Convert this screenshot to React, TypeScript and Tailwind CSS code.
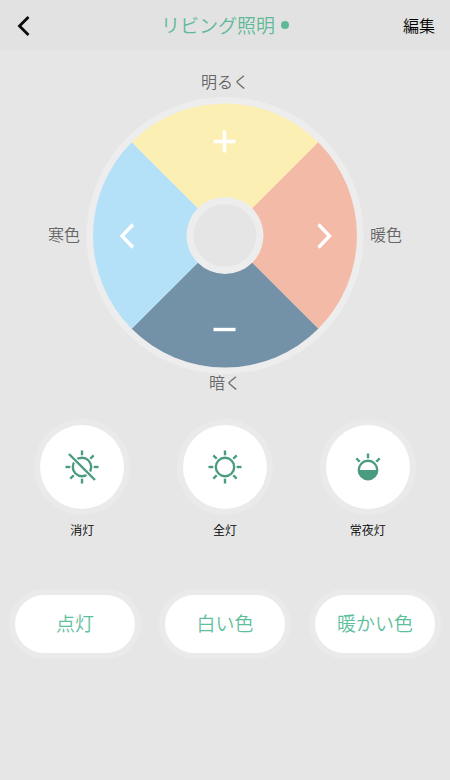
import { useState } from 'react';
import type { ReactNode } from 'react';

type LampMode = 'off' | 'full' | 'night';

const RAY_ANGLES = [0, 45, 90, 135, 180, 225, 270, 315];

const Rays = ({ angles, cy = 18 }: { angles: number[]; cy?: number }) => (
    <>
        {angles.map((angle) => (
            <path key={angle} d={`M18 ${cy - 16.5}v4.8`} transform={`rotate(${angle} 18 ${cy})`} />
        ))}
    </>
);

const OffIcon = () => (
    <svg viewBox="0 0 36 36" className="size-9" fill="none" stroke="#4b9b7f" strokeWidth="2.4" aria-hidden="true">
        <circle cx="18" cy="18" r="9.2" />
        <Rays angles={RAY_ANGLES.filter((angle) => angle !== 135 && angle !== 315)} />
        <path d="M8 8l20 20" stroke="#fff" strokeWidth="5" />
        <path d="M5 5l26 26" />
    </svg>
);

const FullIcon = () => (
    <svg viewBox="0 0 36 36" className="size-9" fill="none" stroke="#4b9b7f" strokeWidth="2.4" aria-hidden="true">
        <circle cx="18" cy="18" r="9.2" />
        <Rays angles={RAY_ANGLES} />
    </svg>
);

const NightIcon = () => (
    <svg viewBox="0 0 36 36" className="size-9" fill="none" stroke="#4b9b7f" strokeWidth="2.4" aria-hidden="true">
        <circle cx="18" cy="21" r="9.2" />
        <path d="M8.8 21h18.4a9.2 9.2 0 0 1-18.4 0z" fill="#4b9b7f" stroke="none" />
        <Rays angles={[0, 45, 315]} cy={21} />
    </svg>
);

const modes: { id: LampMode; label: string; icon: ReactNode }[] = [
    { id: 'off', label: '消灯', icon: <OffIcon /> },
    { id: 'full', label: '全灯', icon: <FullIcon /> },
    { id: 'night', label: '常夜灯', icon: <NightIcon /> },
];

const scenes = ['点灯', '白い色', '暖かい色'];

const WheelButton = ({ label, path, className, onClick }: { label: string; path: string; className: string; onClick: () => void }) => (
    <button type="button" aria-label={label} onClick={onClick} className={`flex items-center justify-center ${className}`}>
        <svg viewBox="0 0 28 28" className="size-7" fill="none" stroke="#fff" strokeWidth="3.4" aria-hidden="true">
            <path d={path} />
        </svg>
    </button>
);

const ColorWheel = () => {
    const [, setBrightness] = useState(50);
    const [, setWarmth] = useState(50);

    return (
        <div className="grid size-[278px] shrink-0">
            <svg viewBox="0 0 278 278" className="col-start-1 row-start-1 size-full" aria-hidden="true">
                <circle cx="139" cy="139.5" r="138.5" fill="#ededed" />
                <path d="M139 139.5L45.7 46.2A132 132 0 0 1 232.3 46.2z" fill="#fbefb3" />
                <path d="M139 139.5L232.3 46.2A132 132 0 0 1 232.3 232.8z" fill="#f4baa8" />
                <path d="M139 139.5L232.3 232.8A132 132 0 0 1 45.7 232.8z" fill="#7391a7" />
                <path d="M139 139.5L45.7 232.8A132 132 0 0 1 45.7 46.2z" fill="#b4e1f8" />
                <circle cx="139" cy="139.5" r="38.5" fill="#ededed" />
                <circle cx="139" cy="139.5" r="31.3" fill="#e5e5e5" />
            </svg>
            <div className="col-start-1 row-start-1 grid grid-cols-[82px_1fr_82px] grid-rows-[90px_1fr_90px]">
                <WheelButton label="明るく" path="M2.5 14.5h22M13.5 3.5v22" className="col-start-2 row-start-1" onClick={() => setBrightness((v) => v + 10)} />
                <WheelButton label="寒色" path="M20 3.5L9 15l11 11.5" className="col-start-1 row-start-2" onClick={() => setWarmth((v) => v - 10)} />
                <WheelButton label="暖色" path="M9.5 3.5l11 11.5-11 11.5" className="col-start-3 row-start-2" onClick={() => setWarmth((v) => v + 10)} />
                <WheelButton label="暗く" path="M2.5 14.5h22" className="col-start-2 row-start-3" onClick={() => setBrightness((v) => v - 10)} />
            </div>
        </div>
    );
};

const App = () => {
    const [, setMode] = useState<LampMode>('full');
    const [, setScene] = useState(scenes[0]);

    return (
        <div className="min-h-screen bg-[#e6e6e6] font-['Noto_Sans_CJK_JP',sans-serif] font-[350]">
            <header className="grid h-[50px] grid-cols-[1fr_auto_1fr] items-center bg-[#e2e2e2] px-[15px]">
                <button type="button" aria-label="戻る" className="justify-self-start">
                    <svg viewBox="0 0 18 24" className="h-6 w-[18px]" fill="none" stroke="#0a0a0a" strokeWidth="2.8" aria-hidden="true">
                        <path d="M13.5 4L4.5 13l9 9" />
                    </svg>
                </button>
                <div className="flex items-center gap-[6px]">
                    <h1 className="pb-px text-[19px] leading-6 font-[350] text-[#5fb999]">リビング照明</h1>
                    <span className="size-2 rounded-full bg-[#5fb999]" />
                </div>
                <button type="button" className="justify-self-end pb-px text-base leading-6 text-black">編集</button>
            </header>

            <main>
                <section className="flex flex-col items-center pt-[23px] text-base leading-4 text-[#666]">
                    <p>明るく</p>
                    <div className="mt-[7px] flex items-center justify-center gap-[6px]">
                        <p className="pb-[2px]">寒色</p>
                        <ColorWheel />
                        <p className="pb-[2px]">暖色</p>
                    </div>
                    <p>暗く</p>
                </section>

                <section className="mt-[35px] grid grid-cols-3 px-[11px]">
                    {modes.map((mode) => (
                        <div key={mode.id} className="flex flex-col items-center">
                            <button
                                type="button"
                                aria-labelledby={`mode-${mode.id}`}
                                onClick={() => setMode(mode.id)}
                                className="flex size-[84px] items-center justify-center rounded-full bg-white ring-6 ring-[#eaeaea]"
                            >
                                {mode.icon}
                            </button>
                            <span id={`mode-${mode.id}`} className="mt-[13px] text-xs leading-4 text-black">{mode.label}</span>
                        </div>
                    ))}
                </section>

                <section className="mt-[57px] grid grid-cols-3 gap-[30px] px-[15px]">
                    {scenes.map((scene) => (
                        <button
                            key={scene}
                            type="button"
                            onClick={() => setScene(scene)}
                            className="h-[58px] rounded-full bg-white pb-[2px] text-[19px] leading-6 whitespace-nowrap text-[#5fbf9d] ring-6 ring-[#eaeaea]"
                        >
                            {scene}
                        </button>
                    ))}
                </section>
            </main>
        </div>
    );
};

export default App;
